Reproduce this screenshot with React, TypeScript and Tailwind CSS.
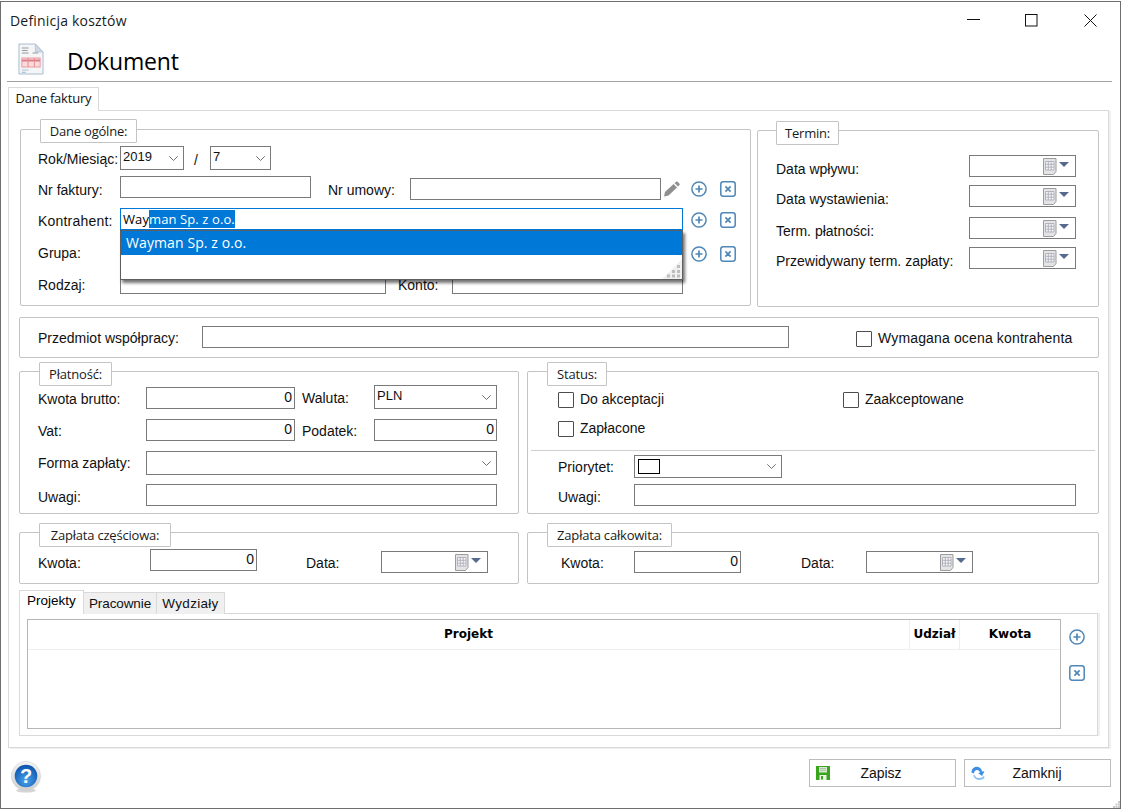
import React from "react";

const Plus = ({ cls = "" }: { cls?: string }) => (
  <svg width="16" height="16" viewBox="0 0 16 16" className={`shrink-0 ${cls}`}>
    <circle cx="8" cy="8" r="7.1" fill="white" stroke="#4f87b7" strokeWidth="1.5" />
    <path d="M8 4.5v7M4.5 8h7" stroke="#4f87b7" strokeWidth="1.7" />
  </svg>
);
const Del = ({ cls = "" }: { cls?: string }) => (
  <svg width="16" height="16" viewBox="0 0 16 16" className={`shrink-0 ${cls}`}>
    <rect x="0.8" y="0.8" width="14.4" height="14.4" rx="2.4" fill="white" stroke="#4f87b7" strokeWidth="1.5" />
    <path d="M5.400 5.400l5.200 5.200M10.600 5.400l-5.200 5.200" stroke="#4f87b7" strokeWidth="1.7" />
  </svg>
);
const Pencil = () => (
  <svg width="18" height="16" viewBox="0 0 18 16" className="shrink-0 ml-[2px] mt-[5px]">
    <path d="M1 15.500l1-4.500 8.600-8 3.400 3.400-8.500 8z" fill="#8f8f8f" />
    <path d="M11.600 2.100l1.500-1.400c.5-.4 1-.4 1.400 0l2 2c.4.4.4.9 0 1.300l-1.500 1.500z" fill="#8f8f8f" />
  </svg>
);
const Chevron = () => (
  <svg width="9" height="5" viewBox="0 0 9 5" className="shrink-0">
    <path d="M0.300 0.300L4.500 4.500l4.200-4.200" fill="none" stroke="#606060" strokeWidth="0.9" />
  </svg>
);
const Calendar = () => (
  <svg width="15" height="17" viewBox="0 0 15 17" className="shrink-0">
    <path d="M0.500 0.500h12.500v13l-2.500 3H0.500z" fill="#e4e4e6" stroke="#9c9c9c" />
    <path d="M2.500 3.500h8.500v8.500H2.500zM5.300 3.500v8.500M8.200 3.500v8.500M2.500 6.300h8.500M2.500 9.200h8.500" fill="#f4f4f6" stroke="#a6a6b4" strokeWidth="0.8" />
  </svg>
);
const Tri = () => (
  <svg width="10" height="5" viewBox="0 0 10 5" className="shrink-0 ml-[1px] mb-[3px]">
    <path d="M0 0h10L5 5z" fill="#566a8f" />
  </svg>
);
const DocIcon = () => (
  <svg width="26" height="32" viewBox="0 0 27 32" preserveAspectRatio="none" className="shrink-0">
    <path d="M1 1h17l8 8v22H1z" fill="#f4f5f7" stroke="#a9bccf" />
    <path d="M18 1v8h8z" fill="#cfd8e2" stroke="#a9bccf" strokeWidth="0.7" />
    <path d="M4 5h7M4 7.500h6M4 10h7M15 10h6" stroke="#9a9a9a" strokeWidth="1.2" />
    <rect x="4" y="15" width="19" height="9" fill="#fbdada" stroke="#eb9aa0" />
    <path d="M4 17.500h19" stroke="#d98088" strokeWidth="2" />
    <path d="M10.500 15v9M17 15v9" stroke="#e48e96" />
    <path d="M4 27h7M4 29.300h4" stroke="#a9c5dc" strokeWidth="1.2" />
  </svg>
);
const Floppy = () => (
  <svg width="14" height="14" viewBox="0 0 14 14" className="shrink-0 ml-[6px]">
    <path d="M0 0h14v14H0z" fill="#38a51c" />
    <rect x="3" y="1" width="8" height="5.500" fill="#d9e8d2" />
    <path d="M4 2.500h6M4 4.300h6" stroke="#9fb597" strokeWidth="0.8" />
    <rect x="3.500" y="9" width="7" height="5" fill="#eef3ea" />
    <rect x="5" y="10" width="2" height="3.500" fill="#38a51c" />
  </svg>
);
const Reload = () => (
  <svg width="14" height="14" viewBox="0 0 14 14" className="shrink-0 ml-[6px]">
    <path d="M0.500 6.500C0.500 3 3 0.800 5.500 0.800c3 0 5 2 5.600 4.700l2.400-.3-2.500 4.800L7 7l2-.3C8.500 5 7.500 4 6 4 4.400 4 3 5.400 3 7.500z" fill="#3d8fe6" />
    <path d="M3.500 8.500c.8 2.600 2.500 3.700 4.800 3.500 1.800-.1 3.300-.9 4.700-2.300l.5 2.300c-1.300 1.300-3.200 2-5.200 2-2.800 0-5.200-1.600-6-4.500z" fill="#8cc1f2" />
  </svg>
);
const Help = () => (
  <svg width="30" height="32" viewBox="0 0 30 32" className="shrink-0">
    <defs>
      <radialGradient id="hb" cx="50%" cy="70%" r="65%">
        <stop offset="0%" stopColor="#4aa3ea" />
        <stop offset="100%" stopColor="#0f57b0" />
      </radialGradient>
      <linearGradient id="hr" x1="0" y1="0" x2="0" y2="1">
        <stop offset="0%" stopColor="#f4f4f4" />
        <stop offset="100%" stopColor="#cfcfcf" />
      </linearGradient>
    </defs>
    <ellipse cx="15" cy="29.500" rx="10" ry="2" fill="#d5d5d5" />
    <circle cx="15" cy="15" r="14.600" fill="url(#hr)" stroke="#d0d0d0" strokeWidth="0.6" />
    <circle cx="15" cy="15" r="11.300" fill="url(#hb)" />
    <text x="15" y="22" textAnchor="middle" fontSize="20" fontWeight="700" fill="white" fontFamily="'Liberation Sans',sans-serif">?</text>
  </svg>
);

const inputBase = "bg-white border border-[#7a7a7a] box-border shrink-0";

const Input = ({ cls, value }: { cls: string; value?: string }) => (
  <div className={`${inputBase} h-[22px] text-right pr-[2px] leading-[16px] pt-[1px] ${cls}`}>{value}</div>
);

const Select = ({ cls, value }: { cls: string; value?: string }) => (
  <div className={`${inputBase} flex items-start justify-between pl-[1px] pr-[5px] text-[13px] leading-[16px] ${cls}`}>
    <div className="pt-[2px] pl-[1px]">{value}</div>
    <div className="mt-[9px]"><Chevron /></div>
  </div>
);

const DateField = ({ cls = "" }: { cls?: string }) => (
  <div className={`${inputBase} h-[22px] w-[107px] flex items-center justify-end pr-[6px] ${cls}`}>
    <Calendar />
    <Tri />
  </div>
);

const Group = ({ cls, legend, legendCls, children }: { cls: string; legend?: string; legendCls?: string; children: React.ReactNode }) => (
  <div className={`relative shrink-0 box-border border border-[#c4c4c4] rounded-[2px] bg-white ${cls}`}>
    {legend && (
      <div className={`absolute h-[24px] bg-white border border-[#c4c4c4] rounded-[1px] box-border text-[13px] leading-[22px] text-center font-['Open_Sans',sans-serif] tracking-[-0.2px] text-[#1a1a1a] ${legendCls}`}>
        {legend}
      </div>
    )}
    {children}
  </div>
);

const Check = ({ label, cls = "", textCls = "" }: { label: string; cls?: string; textCls?: string }) => (
  <div className={`flex items-start ${cls}`}>
    <div className="w-[16px] h-[16px] border border-[#4d4d4d] rounded-[1px] bg-white shrink-0" />
    <span className={`ml-[6px] -mt-[1px] leading-[16px] whitespace-nowrap ${textCls}`}>{label}</span>
  </div>
);

const Lab = ({ cls, children }: { cls: string; children: React.ReactNode }) => (
  <div className={`leading-[16px] shrink-0 whitespace-nowrap ${cls}`}>{children}</div>
);

export default function App() {
  return (
    <div className="w-[1123px] h-[810px] bg-white pt-[1px] font-['Liberation_Sans',sans-serif] text-[14px] text-[#111] overflow-hidden">
      <div className="relative w-[1121px] h-[808px] box-border border border-[#6e6e6e] bg-white flex flex-col">
        {/* title bar */}
        <div className="h-[38px] flex items-center shrink-0 pl-[9px] pr-[23px]">
          <span className="-mt-[2px] font-['Open_Sans',sans-serif] text-[14px] text-[#1a1a1a] tracking-[0.2px]">Definicja kosztów</span>
          <div className="ml-auto flex items-center -mt-[2px]">
            <svg width="13" height="13" viewBox="0 0 13 13"><path d="M0 5.500h13" stroke="#111" strokeWidth="1" /></svg>
            <svg width="13" height="13" viewBox="0 0 13 13" className="ml-[45px]"><rect x="0.500" y="0.500" width="11.500" height="11.500" fill="none" stroke="#111" /></svg>
            <svg width="13" height="13" viewBox="0 0 13 13" className="ml-[46px]"><path d="M0.500 0.500l12 12M12.500 0.500l-12 12" stroke="#111" strokeWidth="1" /></svg>
          </div>
        </div>
        {/* header */}
        <div className="h-[41px] flex items-start shrink-0 pl-[17px] pt-[3px]">
          <DocIcon />
          <span className="ml-[23px] mt-[1px] font-['Open_Sans',sans-serif] text-[23px] leading-[34px] text-black tracking-[-0.2px]">Dokument</span>
        </div>
        <div className="ml-[6px] w-[1105px] h-px bg-[#a3a3a3] shrink-0" />
        {/* tab */}
        <div className="mt-[5px] ml-[7px] h-[24px] shrink-0 relative z-10">
          <div className="w-[91px] h-[24px] box-border border border-b-0 border-[#d9d9d9] bg-white text-center font-['Open_Sans',sans-serif] text-[13px] leading-[21px] tracking-[-0.2px]">Dane faktury</div>
        </div>
        {/* main panel */}
        <div className="ml-[7px] -mt-px w-[1101px] h-[638px] box-border border border-[#d9d9d9] shadow-[2px_1px_0_#efefef] shrink-0 pl-[10px] pt-[18px]">
          {/* row 1 */}
          <div className="flex items-start h-[178px]">
            <Group cls="ml-[1px] w-[731px] h-[177px] pl-[17px]" legend="Dane ogólne:" legendCls="left-[19px] -top-[11px] w-[97px]">
              <div className="flex items-start h-[24px] mt-[16px]">
                <Lab cls="w-[82px] mt-[5px]">Rok/Miesiąc:</Lab>
                <Select cls="w-[64px] h-[24px]" value="2019" />
                <Lab cls="w-[26px] pl-[10px] mt-[6px]">/</Lab>
                <Select cls="w-[61px] h-[24px]" value="7" />
              </div>
              <div className="flex items-start h-[24px] mt-[6px]">
                <Lab cls="w-[82px] mt-[6px]">Nr faktury:</Lab>
                <Input cls="w-[191px]" />
                <Lab cls="ml-[17px] w-[82px] mt-[6px]">Nr umowy:</Lab>
                <Input cls="w-[251px] mt-[2px]" />
                <Pencil />
                <Plus cls="ml-[10px] mt-[5px]" />
                <Del cls="ml-[13px] mt-[5px]" />
              </div>
              <div className="flex items-start h-[22px] mt-[8px]">
                <Lab cls="w-[82px] mt-[5px] tracking-[0.2px]">Kontrahent:</Lab>
                <div className="relative w-[563px] h-[22px] shrink-0 border border-[#0078d7] bg-white box-border pl-[2px] pt-[1px] font-['Open_Sans',sans-serif] text-[13px] leading-[18px] tracking-[0.1px] text-black">
                  <span>Way</span><span className="bg-[#0078d7] text-white">man Sp. z o.o.</span>
                  <div className="absolute z-20 -left-px top-[21px] w-[563px] h-[50px] box-border border border-[#5e5e5e] bg-white shadow-[2px_3px_3px_rgba(0,0,0,0.55)]">
                    <div className="h-[24px] bg-[#0078d7] text-white text-[14px] leading-[24px] pl-[5px] font-['Open_Sans',sans-serif] tracking-[0.1px]">Wayman Sp. z o.o.</div>
                    <svg width="20" height="20" viewBox="0 0 20 20" className="absolute right-0 bottom-0">
                      <path d="M20 0v20H0z" fill="#f0f0f0" />
                      <path d="M15 6h3v3h-3zM10 11h3v3h-3zM15 11h3v3h-3zM5 15.500h3v3H5zM10 15.500h3v3h-3zM15 15.500h3v3h-3z" fill="#bdbdbd" />
                    </svg>
                  </div>
                </div>
                <Plus cls="ml-[8px] mt-[4px]" />
                <Del cls="ml-[13px] mt-[4px]" />
              </div>
              <div className="flex items-start h-[22px] mt-[12px]">
                <Lab cls="w-[82px] mt-[3px]">Grupa:</Lab>
                <Input cls="w-[563px]" />
                <Plus cls="ml-[8px] mt-[4px]" />
                <Del cls="ml-[13px] mt-[4px]" />
              </div>
              <div className="flex items-start h-[22px] mt-[8px]">
                <Lab cls="w-[82px] mt-[5px]">Rodzaj:</Lab>
                <Input cls="w-[266px]" />
                <Lab cls="ml-[12px] w-[54px] mt-[5px]">Konto:</Lab>
                <Input cls="w-[231px]" />
              </div>
            </Group>
            <Group cls="ml-[6px] mt-[1px] w-[342px] h-[177px] pl-[18px] pt-[24px]" legend="Termin:" legendCls="left-[18px] -top-[10px] w-[63px]">
              <div className="w-[300px] flex items-start justify-between h-[22px]">
                <Lab cls="mt-[6px]">Data wpływu:</Lab>
                <DateField />
              </div>
              <div className="w-[300px] flex items-start justify-between h-[22px] mt-[8px]">
                <Lab cls="mt-[6px]">Data wystawienia:</Lab>
                <DateField />
              </div>
              <div className="w-[300px] flex items-start justify-between h-[22px] mt-[10px]">
                <Lab cls="mt-[6px]">Term. płatności:</Lab>
                <DateField />
              </div>
              <div className="w-[300px] flex items-start justify-between h-[22px] mt-[8px]">
                <Lab cls="mt-[6px]">Przewidywany term. zapłaty:</Lab>
                <DateField />
              </div>
            </Group>
          </div>
          {/* row 2 */}
          <Group cls="mt-[10px] w-[1080px] h-[41px] pl-[18px]">
            <div className="flex items-start">
              <Lab cls="w-[164px] mt-[12px]">Przedmiot współpracy:</Lab>
              <Input cls="w-[587px] mt-[8px]" />
              <Check cls="ml-[67px] mt-[13px]" textCls="tracking-[0.15px]" label="Wymagana ocena kontrahenta" />
            </div>
          </Group>
          {/* row 3 */}
          <div className="flex items-start mt-[13px]">
            <Group cls="w-[500px] h-[143px] pl-[18px]" legend="Płatność:" legendCls="left-[19px] -top-[10px] w-[73px]">
              <div className="flex items-start h-[24px] mt-[13px]">
                <Lab cls="w-[108px] mt-[6px]">Kwota brutto:</Lab>
                <Input cls="w-[149px] mt-[2px]" value="0" />
                <Lab cls="ml-[7px] w-[72px] mt-[5px]">Waluta:</Lab>
                <Select cls="w-[123px] h-[24px]" value="PLN" />
              </div>
              <div className="flex items-start h-[22px] mt-[10px]">
                <Lab cls="w-[108px] mt-[4px]">Vat:</Lab>
                <Input cls="w-[149px]" value="0" />
                <Lab cls="ml-[7px] w-[72px] mt-[4px]">Podatek:</Lab>
                <Input cls="w-[123px]" value="0" />
              </div>
              <div className="flex items-start h-[24px] mt-[10px]">
                <Lab cls="w-[108px] mt-[4px]">Forma zapłaty:</Lab>
                <Select cls="w-[351px] h-[24px]" />
              </div>
              <div className="flex items-start h-[22px] mt-[9px]">
                <Lab cls="w-[108px] mt-[5px]">Uwagi:</Lab>
                <Input cls="w-[351px]" />
              </div>
            </Group>
            <Group cls="ml-[8px] w-[572px] h-[143px] pl-[30px]" legend="Status:" legendCls="left-[19px] -top-[10px] w-[60px]">
              <div className="flex items-start mt-[20px]">
                <Check cls="w-[285px]" label="Do akceptacji" />
                <Check label="Zaakceptowane" />
              </div>
              <Check cls="mt-[13px]" label="Zapłacone" />
              <div className="-ml-[27px] w-[564px] h-px bg-[#cfcfcf] mt-[13px]" />
              <div className="flex items-start h-[23px] mt-[4px]">
                <Lab cls="w-[76px] mt-[4px]">Priorytet:</Lab>
                <div className={`${inputBase} w-[148px] h-[23px] flex items-center justify-between pl-[3px] pr-[5px]`}>
                  <div className="w-[22px] h-[15px] border border-black bg-white" />
                  <Chevron />
                </div>
              </div>
              <div className="flex items-start h-[22px] mt-[6px]">
                <Lab cls="w-[76px] mt-[5px]">Uwagi:</Lab>
                <Input cls="w-[442px]" />
              </div>
            </Group>
          </div>
          {/* row 4 */}
          <div className="flex items-start mt-[18px]">
            <Group cls="w-[500px] h-[52px] pl-[18px]" legend="Zapłata częściowa:" legendCls="left-[19px] -top-[10px] w-[132px]">
              <div className="flex items-start mt-[16px]">
                <Lab cls="w-[112px] mt-[6px]">Kwota:</Lab>
                <Input cls="w-[107px]" value="0" />
                <Lab cls="ml-[49px] w-[75px] mt-[6px]">Data:</Lab>
                <DateField cls="mt-[2px]" />
              </div>
            </Group>
            <Group cls="ml-[8px] w-[572px] h-[52px] pl-[33px]" legend="Zapłata całkowita:" legendCls="left-[19px] -top-[10px] w-[125px]">
              <div className="flex items-start mt-[18px]">
                <Lab cls="w-[73px] mt-[4px]">Kwota:</Lab>
                <Input cls="w-[107px]" value="0" />
                <Lab cls="ml-[60px] w-[65px] mt-[4px]">Data:</Lab>
                <DateField />
              </div>
            </Group>
          </div>
          {/* inner tabs */}
          <div className="mt-[6px] flex items-end h-[24px] relative z-10">
            <div className="w-[65px] h-[24px] box-border border border-b-0 border-[#d9d9d9] bg-white pl-[7px] text-[13.5px] leading-[19px] text-black">Projekty</div>
            <div className="w-[73px] h-[22px] box-border border border-l-0 border-b-0 border-[#d9d9d9] bg-[#f0f0f0] text-center text-[13.5px] leading-[22px] tracking-[-0.1px]">Pracownie</div>
            <div className="w-[68px] h-[22px] box-border border border-l-0 border-b-0 border-[#d9d9d9] bg-[#f0f0f0] text-center text-[13.5px] leading-[22px] tracking-[0.3px]">Wydziały</div>
          </div>
          <div className="-mt-px w-[1079px] h-[123px] box-border border border-[#d9d9d9] shadow-[2px_0_0_#f0f0f0] flex items-start pl-[7px] pt-[5px]">
            <div className="w-[1034px] h-[110px] box-border border border-[#b5b5b5] shrink-0">
              <div className="flex h-[30px] border-b border-[#eeeeee] box-border font-['DejaVu_Sans',sans-serif] font-bold text-[12px] leading-[29px] text-black">
                <div className="w-[882px] text-center border-r border-[#eeeeee]">Projekt</div>
                <div className="w-[50px] text-center border-r border-[#eeeeee]">Udział</div>
                <div className="flex-1 text-center">Kwota</div>
              </div>
            </div>
            <div className="flex flex-col ml-[8px] mt-[10px]">
              <Plus />
              <Del cls="mt-[20px]" />
            </div>
          </div>
        </div>
        {/* footer */}
        <div className="flex-1 flex items-start pl-[10px] pr-[9px]">
          <div className="mt-[13px]"><Help /></div>
          <div className="ml-auto mt-[11px] flex items-start">
            <div className="w-[147px] h-[28px] box-border border border-[#bdbdbd] bg-white flex items-center">
              <Floppy />
              <span className="flex-1 text-center pr-[23px]">Zapisz</span>
            </div>
            <div className="ml-[8px] w-[147px] h-[28px] box-border border border-[#bdbdbd] bg-white flex items-center">
              <Reload />
              <span className="flex-1 text-center pr-[21px]">Zamknij</span>
            </div>
          </div>
        </div>
        <svg width="7" height="7" viewBox="0 0 7 7" className="absolute right-0 bottom-0">
          <path d="M5 0h2v2H5zM2.500 2.500h2v2h-2zM5 2.500h2v2H5zM0 5h2v2H0zM2.500 5h2v2h-2zM5 5h2v2H5z" fill="#c8c8c8" />
        </svg>
      </div>
    </div>
  );
}
